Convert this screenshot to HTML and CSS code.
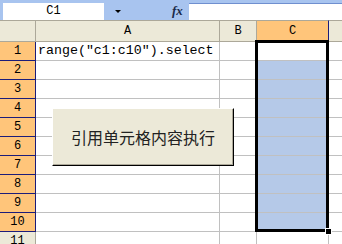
FILE: index.html
```html
<!DOCTYPE html>
<html>
<head>
<meta charset="utf-8">
<link rel="stylesheet" href="styles.css">
</head>
<body>
<div class="window">
  <div class="toolbar">
    <div class="namebox">C1</div>
    <div class="dropdown"><span class="arrow"></span></div>
    <div class="fx">fx</div>
    <div class="formula"></div>
  </div>
  <div class="sheet">
    <div class="hd corner"></div>
    <div class="hd col">A</div>
    <div class="hd col">B</div>
    <div class="hd col sel">C</div>
    <div class="hd col last"></div>

    <div class="hd row sel">1</div><div class="c a1">range("c1:c10").select</div><div class="c"></div><div class="c active"></div><div class="c last"></div>
    <div class="hd row sel">2</div><div class="c"></div><div class="c"></div><div class="c fill"></div><div class="c last"></div>
    <div class="hd row sel">3</div><div class="c"></div><div class="c"></div><div class="c fill"></div><div class="c last"></div>
    <div class="hd row sel">4</div><div class="c"></div><div class="c"></div><div class="c fill"></div><div class="c last"></div>
    <div class="hd row sel">5</div><div class="c"></div><div class="c"></div><div class="c fill"></div><div class="c last"></div>
    <div class="hd row sel">6</div><div class="c"></div><div class="c"></div><div class="c fill"></div><div class="c last"></div>
    <div class="hd row sel">7</div><div class="c"></div><div class="c"></div><div class="c fill"></div><div class="c last"></div>
    <div class="hd row sel">8</div><div class="c"></div><div class="c"></div><div class="c fill"></div><div class="c last"></div>
    <div class="hd row sel">9</div><div class="c"></div><div class="c"></div><div class="c fill"></div><div class="c last"></div>
    <div class="hd row sel">10</div><div class="c"></div><div class="c"></div><div class="c fill"></div><div class="c last"></div>
    <div class="hd row">11</div><div class="c"></div><div class="c"></div><div class="c"></div><div class="c last"></div>
  </div>
  <div class="selection"></div>
  <div class="handle"></div>
  <div class="button">引用单元格内容执行</div>
</div>
</body>
</html>
```
FILE: styles.css
```css
* { box-sizing: border-box; }
html, body { margin: 0; padding: 0; background: #fff; }
.window {
  position: relative;
  width: 342px;
  height: 244px;
  overflow: hidden;
  font-family: "Liberation Mono", monospace;
}
.toolbar {
  height: 20px;
  background: #a8c4ef;
  display: flex;
  align-items: flex-end;
  padding-left: 3px;
}
.namebox {
  width: 101px;
  height: 17px;
  background: #fff;
  font-size: 12px;
  line-height: 17px;
  text-align: center;
  color: #000;
}
.dropdown {
  width: 68px;
  height: 17px;
  display: flex;
  align-items: center;
  padding-left: 11px;
}
.arrow {
  width: 0;
  height: 0;
  border-left: 3px solid transparent;
  border-right: 3px solid transparent;
  border-top: 3px solid #000;
}
.fx {
  width: 17px;
  height: 17px;
  font-family: "Liberation Serif", serif;
  font-style: italic;
  font-weight: bold;
  font-size: 13px;
  line-height: 16px;
  color: #1a2a4a;
}
.formula {
  flex: 1;
  height: 17px;
  background: #fff;
  border-top: 1px solid #6f8fcf;
}
.sheet {
  display: grid;
  grid-template-columns: 36px 184px 37px 72px 1fr;
  grid-template-rows: 22px repeat(11, 19px);
}
.hd {
  background: #ece9d8;
  border-right: 1px solid #aca899;
  border-bottom: 1px solid #aca899;
  color: #000;
  font-size: 12px;
  display: flex;
  align-items: center;
  justify-content: center;
}
.hd.col, .hd.corner { border-top: 1px solid #aca899; }
.hd.sel { background: #ffc57a; }
.hd.row.sel { border-right-color: #1c1c7a; border-bottom-color: #1c1c7a; }
.hd.col.sel { border-right-color: #1c1c7a; border-bottom-color: #1c1c7a; }
.hd.last { border-right: none; }
.c {
  border-right: 1px solid #c0c0c0;
  border-bottom: 1px solid #c0c0c0;
  background: #fff;
}
.c.last { border-right: none; }
.c.fill { background: #b5c9e8; }
.a1 {
  font-family: "Liberation Mono", monospace;
  font-size: 13.3px;
  line-height: 18px;
  padding-left: 2px;
  white-space: nowrap;
  overflow: visible;
  color: #000;
}
.selection {
  position: absolute;
  left: 255px;
  top: 40px;
  width: 74px;
  height: 192px;
  border: 3px solid #000;
}
.handle {
  position: absolute;
  left: 325px;
  top: 228px;
  width: 7px;
  height: 7px;
  background: #000;
  border: 1px solid #fff;
}
.button {
  position: absolute;
  left: 52px;
  top: 108px;
  width: 182px;
  height: 58px;
  background: #ece9d8;
  border-top: 1px solid #fff;
  border-left: 1px solid #fff;
  border-right: 1px solid #000;
  border-bottom: 1px solid #000;
  box-shadow: inset -1px -1px 0 #aca899;
  display: flex;
  align-items: center;
  justify-content: center;
  font-family: "Noto Sans CJK SC", sans-serif;
  font-size: 16px;
  color: #222;
}
```
